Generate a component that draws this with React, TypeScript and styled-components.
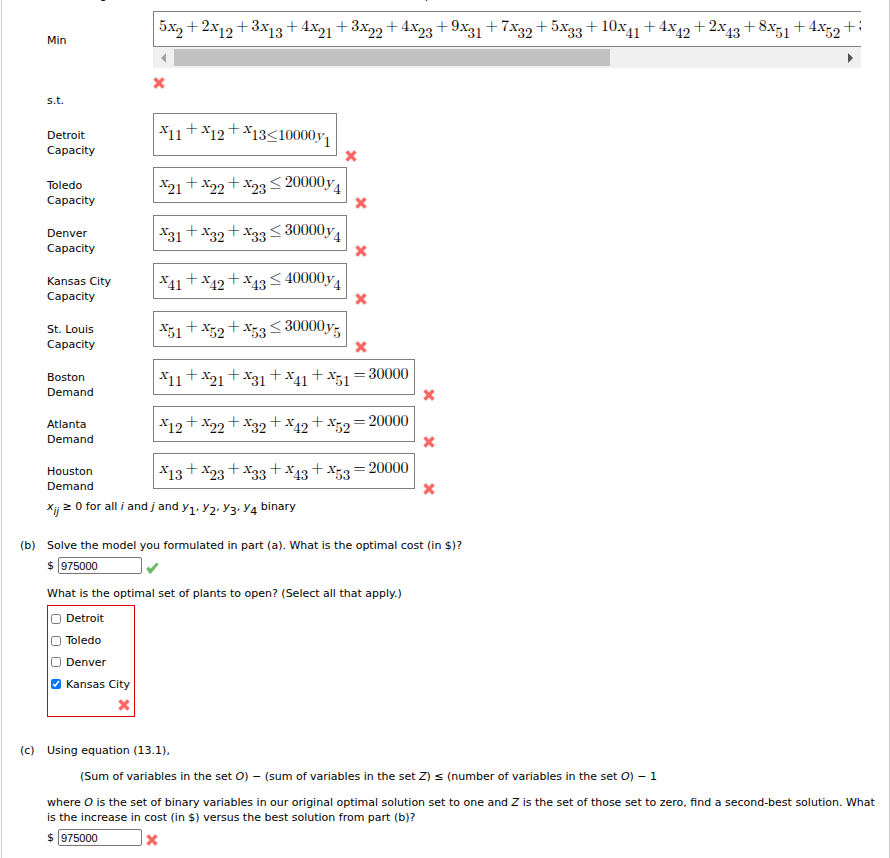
import React, { useState } from "react";
import styled, { createGlobalStyle } from "styled-components";

const Global = createGlobalStyle`
  *, *::before, *::after { box-sizing: border-box; }
  body {
    margin: 0;
    background: #fff;
    color: #000;
    font: 11px/15px Verdana, "DejaVu Sans", sans-serif;
  }
`;

const Page = styled.main`
  margin-left: 1px;
  min-height: 100vh;
  border: solid #ccc;
  border-width: 0 1px;
  padding: 0 12px 8px 18px;
`;

const CutLine = styled.div`
  height: 3px;
  overflow: hidden;
  display: flex;
  align-items: flex-end;
  gap: 318px;
  padding-left: 53px;
`;

const Part = styled.section`
  display: grid;
  grid-template-columns: 27px minmax(0, 1fr);
`;

const Tag = styled.div``;
const Body = styled.div`
  min-width: 0;
`;

const Objective = styled.div`
  display: grid;
  grid-template-columns: 106px minmax(0, 1fr);
  padding: 8px 16px 0 0;
`;

const ObjectiveLabel = styled.div`
  padding-top: 22px;
`;

const Scroller = styled.div`
  overflow: hidden;
  height: 36px;
  white-space: nowrap;
`;

const ScrollBar = styled.div`
  display: flex;
  height: 21px;
  padding: 2px 0;
  background: #f0f0f0;
`;

const ArrowButton = styled.button<{ $tone: string }>`
  flex: none;
  display: flex;
  align-items: center;
  justify-content: center;
  width: 21px;
  border: 0;
  padding: 0;
  background: none;
  color: ${(p) => p.$tone};
`;

const Track = styled.div`
  flex: 1;
`;

const Thumb = styled.div`
  width: 65.5%;
  height: 100%;
  background: #c1c1c1;
`;

const MarkBelow = styled.div`
  display: flex;
  padding-top: 9px;
`;

const SubjectTo = styled.p`
  margin: 4px 0 5px;
`;

const Constraint = styled.div<{ $pitch: number }>`
  display: grid;
  grid-template-columns: 106px auto;
  justify-content: start;
  align-items: start;
  height: ${(p) => p.$pitch}px;
`;

const ConstraintLabel = styled.div<{ $drop: number }>`
  padding-top: ${(p) => p.$drop}px;
  width: 70px;
`;

const Answer = styled.div`
  display: flex;
  align-items: flex-end;
  gap: 8px;
`;

const MarkSlot = styled.span`
  display: flex;
  height: 0;
  align-items: center;
`;

const Formula = styled.div<{ $tall?: boolean }>`
  display: inline-block;
  height: ${(p) => (p.$tall ? 43 : 36)}px;
  border: 1px solid #808080;
  padding: 4px 5px 0;
  font: 16px/20px "Latin Modern Math", "Liberation Serif", serif;
  white-space: nowrap;
`;

const Var = styled.i``;

const Sub = styled.span`
  display: inline-block;
  line-height: 0;
  font-size: 15px;
  position: relative;
  top: 7px;
`;

const Op = styled.span`
  margin: 0 3px;
`;

const Text = styled.p<{ $top: number; $indent?: number }>`
  margin: ${(p) => p.$top}px 0 0 ${(p) => p.$indent ?? 0}px;
`;

const SmallSub = styled.span<{ $size: number }>`
  display: inline-block;
  line-height: 0;
  font-size: ${(p) => p.$size}px;
  position: relative;
  top: 5px;
`;

const MoneyRow = styled.div`
  display: flex;
  align-items: center;
  gap: 4px;
  height: 21px;
  margin-top: 2px;
`;

const MoneyInput = styled.input`
  width: 84px;
  height: 17px;
  border: 1px solid #767676;
  border-radius: 2px;
  padding: 1px 2px;
  font: 11px/13px Arial, "Liberation Sans", sans-serif;
  color: #000;
`;

const MoneyMark = styled.span`
  display: flex;
  padding-top: 4px;
`;

const Choices = styled.fieldset`
  display: flex;
  flex-direction: column;
  width: max-content;
  height: 112px;
  margin: 4px 0 0;
  border: 1px solid #d00;
  padding: 2px 4px 5px 3px;
`;

const Choice = styled.label`
  display: flex;
  align-items: center;
  gap: 5px;
  height: 22px;
`;

const Box = styled.input`
  width: 10px;
  height: 10px;
  margin: 0;
`;

const ChoiceMark = styled.span`
  display: flex;
  justify-content: flex-end;
  padding-top: 4px;
`;

function Wrong() {
  return (
    <svg width="12" height="12" viewBox="0 0 12 12" role="img" aria-label="Incorrect">
      <path d="M1.6 1.6 10.4 10.4M10.4 1.6 1.6 10.4" stroke="#fbb5b3" strokeWidth="4.2" />
      <path d="M1.6 1.6 10.4 10.4M10.4 1.6 1.6 10.4" stroke="#fa6563" strokeWidth="2.8" />
    </svg>
  );
}

function Right() {
  return (
    <svg width="13" height="12" viewBox="0 0 13 12" role="img" aria-label="Correct">
      <path d="M0.4 6.9 2.6 4.7 4.7 6.8 10.5 0.8 12.5 2.3 5 11.4 3.6 11.4Z" fill="#69b566" stroke="#a7d3a5" strokeWidth="0.6" />
    </svg>
  );
}

function Term({ n = "", v = "x", sub }: { n?: string; v?: string; sub: string }) {
  return (
    <>
      {n}
      <Var>{v}</Var>
      <Sub>{sub}</Sub>
    </>
  );
}

function Sum({ terms }: { terms: [string, string][] }) {
  return (
    <>
      {terms.map(([n, sub], i) => (
        <React.Fragment key={i}>
          {i > 0 && <Op>+</Op>}
          <Term n={n} sub={sub} />
        </React.Fragment>
      ))}
    </>
  );
}

const objective: [string, string][] = [
  ["5", "2"], ["2", "12"], ["3", "13"], ["4", "21"], ["3", "22"], ["4", "23"], ["9", "31"], ["7", "32"],
  ["5", "33"], ["10", "41"], ["4", "42"], ["2", "43"], ["8", "51"], ["4", "52"], ["3", "53"],
];

const capacities = [
  { name: "Toledo", row: "2", limit: "20000", y: "4" },
  { name: "Denver", row: "3", limit: "30000", y: "4" },
  { name: "Kansas City", row: "4", limit: "40000", y: "4" },
  { name: "St. Louis", row: "5", limit: "30000", y: "5" },
];

const demands = [
  { name: "Boston", col: "1", total: "30000" },
  { name: "Atlanta", col: "2", total: "20000" },
  { name: "Houston", col: "3", total: "20000" },
];

function Money({ label, children }: { label: string; children: React.ReactNode }) {
  const [value, setValue] = useState("975000");
  return (
    <MoneyRow>
      <span>$</span>
      <MoneyInput aria-label={label} value={value} onChange={(e) => setValue(e.target.value)} />
      <MoneyMark>{children}</MoneyMark>
    </MoneyRow>
  );
}

export default function App() {
  return (
    <>
      <Global />
      <Page>
        <Part>
          <Tag />
          <Body>
            <CutLine><span>g</span><span>p</span></CutLine>
            <Objective>
              <ObjectiveLabel>Min</ObjectiveLabel>
              <div>
                <Scroller>
                  <Formula><Sum terms={objective} /></Formula>
                </Scroller>
                <ScrollBar>
                  <ArrowButton $tone="#a3a3a3" aria-label="Scroll left">
                    <svg width="5" height="10" viewBox="0 0 5 10"><path d="M5 0V10L0 5Z" fill="currentColor" /></svg>
                  </ArrowButton>
                  <Track><Thumb /></Track>
                  <ArrowButton $tone="#505050" aria-label="Scroll right">
                    <svg width="5" height="10" viewBox="0 0 5 10"><path d="M0 0V10L5 5Z" fill="currentColor" /></svg>
                  </ArrowButton>
                </ScrollBar>
                <MarkBelow><Wrong /></MarkBelow>
              </div>
            </Objective>
            <SubjectTo>s.t.</SubjectTo>

            <Constraint $pitch={54}>
              <ConstraintLabel $drop={15}>Detroit Capacity</ConstraintLabel>
              <Answer>
                <Formula $tall>
                  <Sum terms={[["", "11"], ["", "12"], ["", "13"]]} />
                  <Sub>≤10000<Var>y</Var><Sub>1</Sub></Sub>
                </Formula>
                <MarkSlot><Wrong /></MarkSlot>
              </Answer>
            </Constraint>
            {capacities.map((c) => (
              <Constraint key={c.name} $pitch={48}>
                <ConstraintLabel $drop={11}>{c.name} Capacity</ConstraintLabel>
                <Answer>
                  <Formula>
                    <Sum terms={[["", c.row + "1"], ["", c.row + "2"], ["", c.row + "3"]]} />
                    <Op>≤</Op>
                    {c.limit}
                    <Var>y</Var>
                    <Sub>{c.y}</Sub>
                  </Formula>
                  <MarkSlot><Wrong /></MarkSlot>
                </Answer>
              </Constraint>
            ))}
            {demands.map((d) => (
              <Constraint key={d.name} $pitch={47}>
                <ConstraintLabel $drop={11}>{d.name} Demand</ConstraintLabel>
                <Answer>
                  <Formula>
                    <Sum terms={["1", "2", "3", "4", "5"].map((r) => ["", r + d.col] as [string, string])} />
                    <Op>=</Op>
                    {d.total}
                  </Formula>
                  <MarkSlot><Wrong /></MarkSlot>
                </Answer>
              </Constraint>
            ))}
            <Text $top={-1}>
              <i>x<SmallSub $size={10}>ij</SmallSub></i> ≥ 0 for all <i>i</i> and <i>j</i> and{" "}
              {["1", "2", "3", "4"].map((n, i) => (
                <React.Fragment key={n}>
                  <i>y</i>
                  <SmallSub $size={11}>{n}</SmallSub>
                  {i < 3 ? ", " : " "}
                </React.Fragment>
              ))}
              binary
            </Text>
          </Body>
        </Part>

        <Text as={Part} $top={24}>
          <Tag>(b)</Tag>
          <Body>
            Solve the model you formulated in part (a). What is the optimal cost (in $)?
            <Money label="Optimal cost in dollars"><Right /></Money>
            <Text $top={10}>What is the optimal set of plants to open? (Select all that apply.)</Text>
            <Choices aria-label="Plants to open">
              {["Detroit", "Toledo", "Denver", "Kansas City"].map((name) => (
                <Choice key={name}>
                  <Box type="checkbox" defaultChecked={name === "Kansas City"} />
                  {name}
                </Choice>
              ))}
              <ChoiceMark><Wrong /></ChoiceMark>
            </Choices>
          </Body>
        </Text>

        <Text as={Part} $top={26}>
          <Tag>(c)</Tag>
          <Body>
            Using equation (13.1),
            <Text $top={11} $indent={33}>
              (Sum of variables in the set <i>O</i>) − (sum of variables in the set <i>Z</i>) ≤ (number of variables in the set <i>O</i>) − 1
            </Text>
            <Text $top={11}>
              where <i>O</i> is the set of binary variables in our original optimal solution set to one and <i>Z</i> is the set of those set to zero, find a second-best solution. What is the increase in cost (in $) versus the best solution from part (b)?
            </Text>
            <Money label="Increase in cost in dollars"><Wrong /></Money>
          </Body>
        </Text>
      </Page>
    </>
  );
}
